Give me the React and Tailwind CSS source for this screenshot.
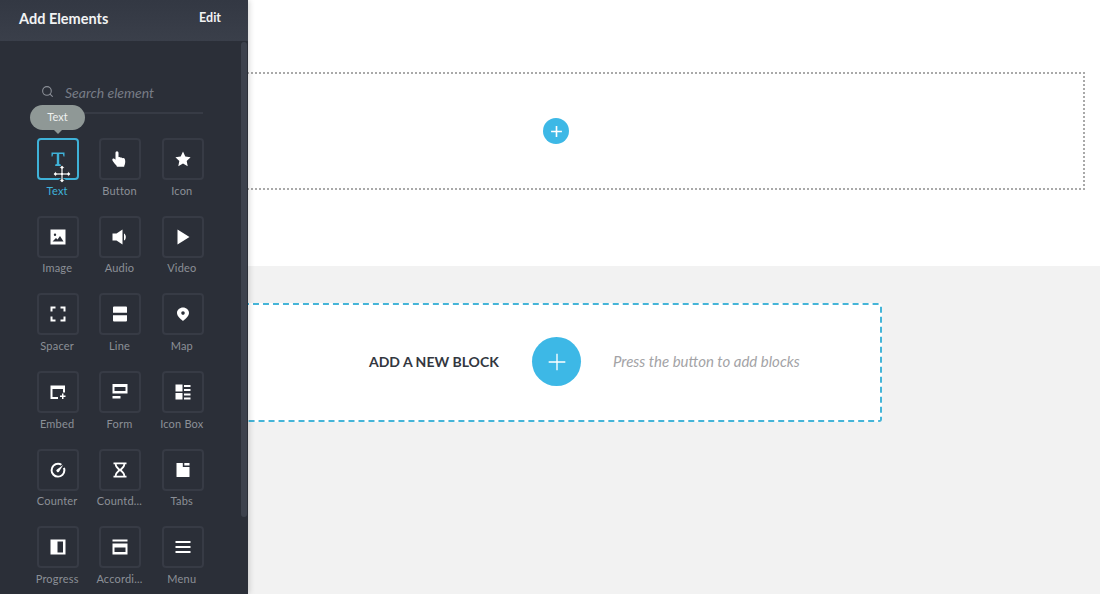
import React from "react";
import { Search } from "lucide-react";

const icons = {
  text: <path d="M1.5 1.5h13v4h-1l-.6-2.4H9.2v9.9l1.6.5V15H5.2v-1.500l1.6-.5V3.100H3.100L2.500 5.500h-1z" />,
  button: (
    <path d="M3.500 2c0-1 .6-1.700 1.500-1.700S6.500 1 6.500 2v4.200c.8-.4 1.600-.2 2 .4.8-.4 1.700-.1 2 .6.9-.4 2-.1 2.300.9.6 1.600.6 3.800 0 5.400l-.6 1.500v.8H4.800v-.8C3.500 13.300 1.500 11.500.6 9.700.1 8.600.4 7.700 1.200 7.500c.9-.2 1.600.4 2.300 1.300z" />
  ),
  icon: <path d="M8 .6l2.300 4.900 5.300.7-3.900 3.700 1 5.300L8 12.600l-4.700 2.600 1-5.300L.4 6.200l5.300-.7z" />,
  image: (
    <path
      fillRule="evenodd"
      d="M.5.5h15v15H.5zM5 4.500a1.200 1.200 0 100 2.400 1.200 1.200 0 000-2.400zM2.500 12.500h11L10 7l-2.500 3.500-1.500-1.500z"
    />
  ),
  audio: (
    <>
      <path d="M.5 4.500h4L10.500.5v15l-6-4h-4z" />
      <path d="M12 4.500c2.400 1 2.400 6 0 7z" />
    </>
  ),
  video: <path d="M2.500.5L14.500 8 2.500 15.500z" />,
  spacer: (
    <path d="M.5.5h5v2h-3v3h-2zM10.500.5h5v5h-2v-3h-3zM.5 10.500h2v3h3v2h-5zM13.500 10.500h2v5h-5v-2h3z" />
  ),
  line: (
    <path d="M1 1.500a1 1 0 011-1h12a1 1 0 011 1v5.200H1zM1 9.300h14v5.200a1 1 0 01-1 1H2a1 1 0 01-1-1z" />
  ),
  map: (
    <path
      fillRule="evenodd"
      d="M8 1.500c3.200 0 6 2.400 6 5.500 0 3-3.200 5.700-6 8-2.800-2.300-6-5-6-8 0-3.100 2.800-5.500 6-5.500zM8 5.300a1.800 1.800 0 100 3.600 1.800 1.800 0 000-3.600z"
    />
  ),
  embed: (
    <path
      fillRule="evenodd"
      d="M.5 1.500h14.500v7h-2V5H2.500v8H8v2H.5zM12 9.500h1.500V11.500H15.500V13H13.500V15H12V13H10V11.500H12z"
    />
  ),
  form: (
    <path fillRule="evenodd" d="M.5 0h15v9.500H.5zM2.500 3v4h11V3zM.5 12h8v2.500h-8z" />
  ),
  iconBox: (
    <path d="M.5.5h7v7h-7zM.5 9h7v6.500h-7zM9 1h6.500v2H9zM9 5h6.500v2H9zM9 9.500h6.500v2H9zM9 13.500h6.500v2H9z" />
  ),
  counter: (
    <path d="M8 .8c1.500 0 2.900.4 4 1.200l-1.200 1.600A5.400 5.400 0 1013.400 8.300c0-.7-.1-1.400-.4-2l1.800-.8c.4.900.6 1.800.6 2.800A7.400 7.400 0 118 .8zM13.200 3L9.300 9.300a1.500 1.500 0 11-2-2z" />
  ),
  countdown: (
    <path
      fillRule="evenodd"
      d="M1.500.5h13v1.800h-1.300c0 2.600-1.900 4.200-3.400 5.700 1.500 1.500 3.400 3.100 3.400 5.700h1.300v1.800h-13v-1.800h1.300c0-2.600 1.900-4.200 3.400-5.700C4.700 6.500 2.800 4.900 2.800 2.300H1.500zM4.600 2.300c.1 2 2.100 3.400 3.400 4.600 1.300-1.200 3.300-2.600 3.400-4.600zM8 9.100c-1.300 1.200-3.300 2.600-3.400 4.600h6.800c-.1-2-2.100-3.400-3.400-4.600z"
    />
  ),
  tabs: (
    <path d="M1.500 1h6.300v4h6.700v9.500a.5.500 0 01-.5.500h-12a.5.500 0 01-.5-.5zM9.300 1h5.200v2.500H9.300z" />
  ),
  progress: <path fillRule="evenodd" d="M.5.5h15v15H.5zM7.500 2.500v11H13v-11z" />,
  accordion: (
    <path fillRule="evenodd" d="M.5.500h15v2h-15zM.5 4.500h15v11h-15zM2.500 8.500v4.500h11V8.500z" />
  ),
  menu: <path d="M.5 2h15v2h-15zM.5 7h15v2h-15zM.5 12h15v2h-15z" />,
};

const elements = [
  { id: "text", label: "Text", active: true },
  { id: "button", label: "Button" },
  { id: "icon", label: "Icon" },
  { id: "image", label: "Image" },
  { id: "audio", label: "Audio" },
  { id: "video", label: "Video" },
  { id: "spacer", label: "Spacer" },
  { id: "line", label: "Line" },
  { id: "map", label: "Map" },
  { id: "embed", label: "Embed" },
  { id: "form", label: "Form" },
  { id: "iconBox", label: "Icon Box" },
  { id: "counter", label: "Counter" },
  { id: "countdown", label: "Countd..." },
  { id: "tabs", label: "Tabs" },
  { id: "progress", label: "Progress" },
  { id: "accordion", label: "Accordi..." },
  { id: "menu", label: "Menu" },
];

const MoveCursor = () => (
  <svg
    viewBox="0 0 20 20"
    className="absolute left-[13px] top-[24px] w-5 h-5"
    fill="#fff"
    stroke="#1f2329"
    strokeWidth="0.8"
  >
    <path d="M10 1l3 3.500h-2V9h4.500V7l3.500 3-3.500 3v-2H11v4.500h2L10 19l-3-3.500h2V11H4.500v2L1 10l3.500-3v2H9V4.500H7z" />
  </svg>
);

const ElementTile = ({ element }) => (
  <div className="flex flex-col items-center">
    <div
      className={`relative w-[42px] h-[42px] rounded-[4px] border-2 flex items-center justify-center ${
        element.active
          ? "border-[#3fb2d8] text-[#3fb2d8]"
          : "border-[#373b45] text-white"
      }`}
    >
      <svg viewBox="0 0 16 16" className="w-4 h-4" fill="currentColor">
        {icons[element.id]}
      </svg>
      {element.active && <MoveCursor />}
    </div>
    <span
      className={`mt-[3.5px] pr-[2px] text-[11px] leading-[14px] tracking-[0.2px] whitespace-nowrap ${
        element.active ? "text-[#3fb2d8]" : "text-[#8b8f97]"
      }`}
    >
      {element.label}
    </span>
  </div>
);

const Sidebar = () => (
  <aside className="absolute left-0 top-0 z-10 w-[248px] h-[594px] overflow-hidden bg-[#2b2f38] shadow-[1px_0_6px_rgba(0,0,0,0.18)]">
    <header className="h-[41px] bg-gradient-to-b from-[#333843] to-[#3a3f4a] flex items-center justify-between pl-[19px] pr-[27px] pb-[4px]">
      <h1 className="text-[14.5px] font-bold text-[#f2f3f4]">Add Elements</h1>
      <button className="text-[12.5px] font-bold text-[#f2f3f4]">Edit</button>
    </header>

    {/* Scrollbar */}
    <div className="absolute left-[241px] top-[42px] w-[6px] h-[475px] rounded-full bg-[#3d424d]" />

    <div className="relative ml-[37px] mr-[45px] mt-[32px] h-[41px] border-b-2 border-[#373b45] flex items-start pt-[11px]">
      <Search size={13} strokeWidth={2} className="ml-[4px] mt-[1px] text-[#8b8f97]" />
      <span className="ml-[11px] text-[14px] leading-[18px] italic text-[#777c86]">
        Search element
      </span>
    </div>

    {/* Tooltip */}
    <div className="absolute left-[30px] top-[105px] w-[55px] h-[25px] rounded-full bg-[#8f9896] flex items-center justify-center text-[11px] text-[#eef0ef]">
      Text
      <span className="absolute left-[24px] top-[25px] border-x-[4px] border-t-[4px] border-x-transparent border-t-[#8f9896]" />
    </div>

    <div className="ml-[27px] mt-[24px] w-[187px] grid grid-cols-3 auto-rows-[77.7px]">
      {elements.map((element) => (
        <ElementTile key={element.id} element={element} />
      ))}
    </div>
  </aside>
);

const Plus = ({ size, width }) => (
  <svg viewBox="0 0 24 24" width={size} height={size} fill="none" stroke="#fff" strokeWidth={width}>
    <path d="M12 2v20M2 12h20" />
  </svg>
);

const App = () => {
  return (
    <div
      className="relative w-[1100px] h-[594px] overflow-hidden bg-white"
      style={{ fontFamily: '"Lato", "Noto Sans", sans-serif' }}
    >
      <Sidebar />

      <section className="h-[266px] pt-[72px] pl-[27px]">
        <div className="w-[1058px] h-[118px] border-2 border-dotted border-[#a9a9a9] flex items-center justify-center">
          <div className="w-[26px] h-[26px] rounded-full bg-[#3db8e6] flex items-center justify-center">
            <Plus size={13} width={3} />
          </div>
        </div>
      </section>

      <section className="h-[328px] bg-[#f2f2f2] pt-[37px] pl-[230px]">
        <div className="w-[652px] h-[119px] rounded-[3px] bg-white border-2 border-dashed border-[#45b5d8] flex items-center pb-[2px]">
          <span className="ml-[137px] w-[131px] text-[14px] font-bold text-[#33373f] whitespace-nowrap">
            ADD A NEW BLOCK
          </span>
          <div className="ml-[32px] w-[49px] h-[49px] rounded-full bg-[#3db8e6] flex items-center justify-center">
            <Plus size={20} width={1.6} />
          </div>
          <span className="ml-[32px] text-[15px] italic text-[#a3a3a6] whitespace-nowrap">
            Press the button to add blocks
          </span>
        </div>
      </section>
    </div>
  );
};

export default App;
